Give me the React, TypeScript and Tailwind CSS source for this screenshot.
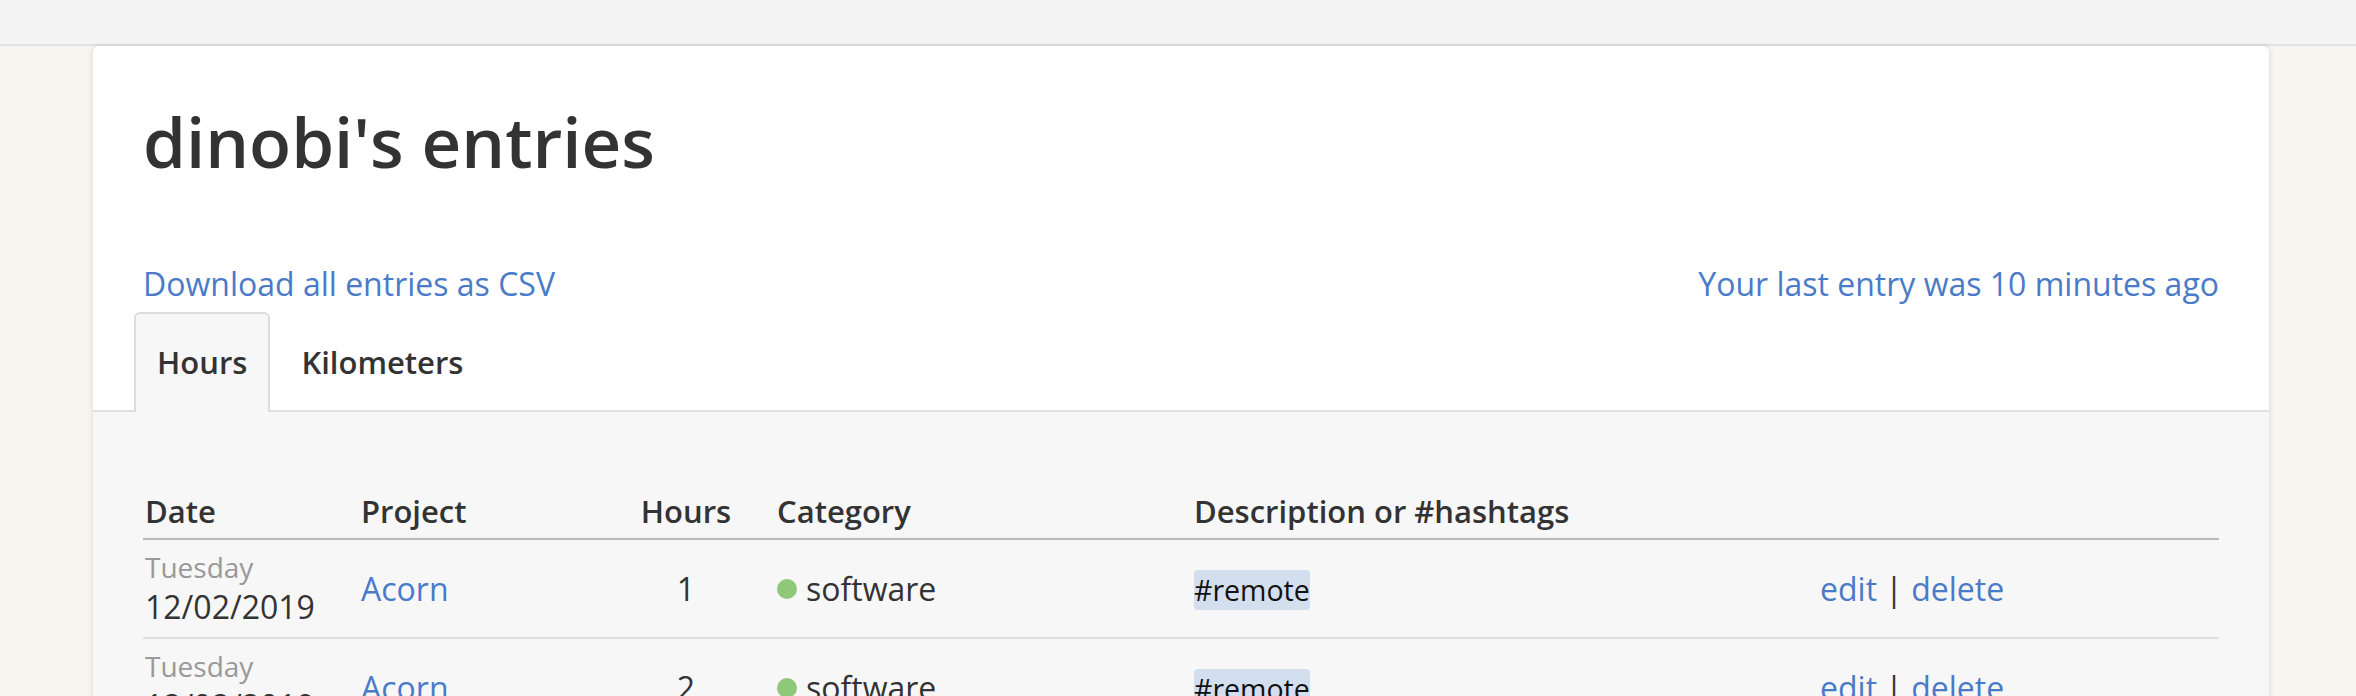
const font = { fontFamily: '"Open Sans", "Noto Sans", sans-serif' };

const entries = [
  { day: "Tuesday", date: "12/02/2019", project: "Acorn", hours: 1, category: "software", tag: "#remote" },
  { day: "Tuesday", date: "12/02/2019", project: "Acorn", hours: 2, category: "software", tag: "#remote" },
  { day: "Monday", date: "11/02/2019", project: "Acorn", hours: 3, category: "software", tag: "#remote" },
];

export default function App() {
  return (
    <div className="min-h-screen bg-[#f6f5f0] text-[#333] text-[32px]" style={font}>
      {/* Top bar */}
      <div className="h-[46px] bg-[#f4f4f4] border-b-2 border-[#e2e2e2]"></div>

      {/* Card */}
      <div className="mx-auto w-[2176px] translate-x-[3px] bg-white rounded-t-[6px] shadow-[0_0_6px_rgba(0,0,0,0.13)] overflow-hidden">
        <div className="px-[50px] pt-[46px]">
          <h1 className="text-[69px] font-semibold leading-[98px] text-[#333]">dinobi's entries</h1>

          <div className="mt-[72px] flex justify-between leading-[44px]">
            <a className="text-[#4a7bc8]">Download all entries as CSV</a>
            <a className="text-[#4a7bc8]">Your last entry was 10 minutes ago</a>
          </div>
        </div>

        {/* Tabs */}
        <div className="mt-[6px] border-b-2 border-[#e0e0e0] px-[41px]">
          <div className="flex gap-[8px] -mb-[2px]">
            <div className="px-[21px] pt-[26px] pb-[26px] border-2 border-b-0 border-[#dddddd] rounded-t-[6px] bg-[#f7f7f7] text-[31px] font-semibold leading-[44px]">
              Hours
            </div>
            <div className="px-[21px] pt-[26px] pb-[26px] border-2 border-transparent text-[31px] font-semibold leading-[44px]">
              Kilometers
            </div>
          </div>
        </div>

        {/* Panel */}
        <div className="bg-[#f7f7f7] px-[50px] pt-[77px] pb-[60px]">
          <div className="flex items-end text-[31px] font-semibold leading-[44px] pb-[5px] border-b-2 border-[#b8b8b8]">
            <div className="w-[218px] pl-[2px]">Date</div>
            <div className="w-[258px]">Project</div>
            <div className="w-[134px] text-center">Hours</div>
            <div className="w-[441px] pl-[24px]">Category</div>
            <div className="w-[626px]">Description or #hashtags</div>
            <div className="flex-1"></div>
          </div>

          {entries.map((e, i) => (
            <div key={i} className="flex items-center pt-[9px] pb-[8px] border-b-2 border-[#dedede]">
              <div className="w-[218px] pl-[2px]">
                <div className="text-[28px] leading-[36px] text-[#999]">{e.day}</div>
                <div className="leading-[44px]">{e.date}</div>
              </div>
              <div className="w-[258px] leading-[44px]">
                <a className="text-[#4a7bc8]">{e.project}</a>
              </div>
              <div className="w-[134px] text-center leading-[44px]">{e.hours}</div>
              <div className="w-[441px] pl-[24px] flex items-center leading-[44px]">
                <span className="inline-block w-[20px] h-[20px] rounded-full bg-[#8fc878] mr-[9px]"></span>
                <span>{e.category}</span>
              </div>
              <div className="w-[626px]">
                <span className="inline-block bg-[#d3deef] rounded-[4px] text-[28.5px] leading-[40px] text-[#111]">
                  {e.tag}
                </span>
              </div>
              <div className="flex-1 leading-[44px]">
                <a className="text-[#4a7bc8]">edit</a> | <a className="text-[#4a7bc8]">delete</a>
              </div>
            </div>
          ))}
        </div>
      </div>
    </div>
  );
}
